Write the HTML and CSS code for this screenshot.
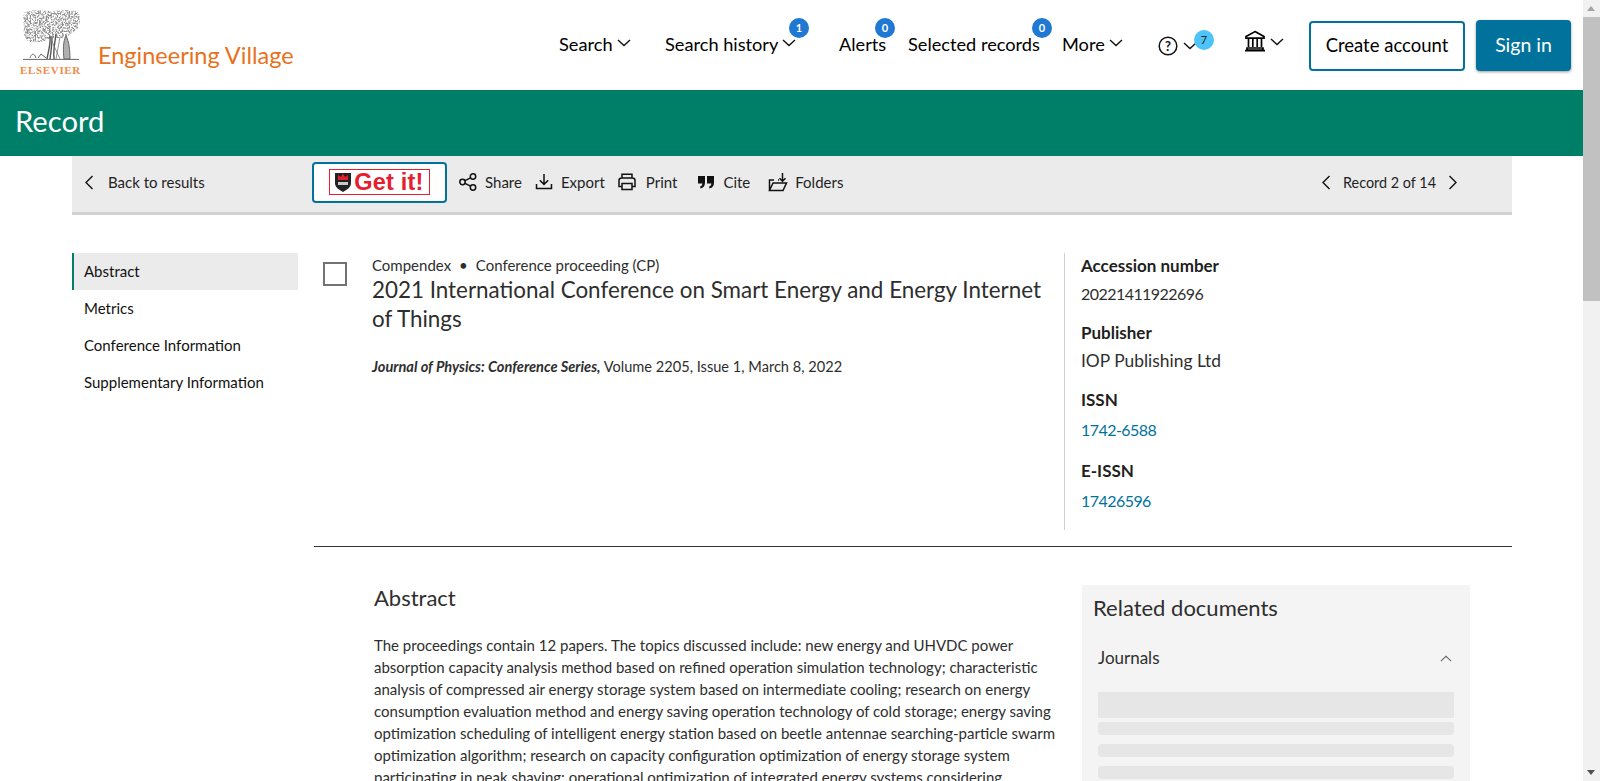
FILE: index.html
```html
<!DOCTYPE html>
<html lang="en">
<head>
<meta charset="utf-8">
<title>Record - Engineering Village</title>
<link rel="stylesheet" href="styles.css">
</head>
<body>
<div class="window">
<div class="page">
  <header class="topbar">
    <a class="brand">
      <span class="elsevier">
        <svg class="tree" viewBox="0 0 58 50" width="58" height="50" aria-hidden="true">
          <defs>
            <filter id="speckle" x="0" y="0" width="100%" height="100%">
              <feTurbulence type="fractalNoise" baseFrequency="0.62" numOctaves="2" seed="7" result="n"/>
              <feColorMatrix in="n" type="matrix" values="0 0 0 0 0.27  0 0 0 0 0.27  0 0 0 0 0.27  3.4 3.4 0 0 -3" result="t"/>
              <feComposite in="t" in2="SourceAlpha" operator="in"/>
            </filter>
          </defs>
          <path class="canopy" filter="url(#speckle)" d="M1 3 C10 -1 20 1 29 1 S50 -1 57 2 L58 12 C57 18 53 22 48 24 C44 29 36 28 30 28 C22 32 16 33 8 32 C3 30 1 24 2 18 Z"/>
          <path class="trunk" d="M28 26 C29 34 26 42 25 49 M34 24 C33 32 31 40 32 49 M30 27 C30 34 29 42 28 49"/>
          <path class="figure" d="M44 26 C41 31 41 41 42 49 L48 49 C48 41 47 31 44 26 Z"/>
          <path class="vine" d="M28 27 L38 49 M38 27 L34 49"/>
          <path class="ground" d="M1 49.4 L57 49.4 M8 48 C9 44 12 42 14 48 M16 48 L19 44 L24 48"/>
        </svg>
        <span class="elsevier-word">ELSEVIER</span>
      </span>
      <span class="brand-name">Engineering Village</span>
    </a>
    <nav class="nav">
      <a class="nav-item">Search<svg class="chev" viewBox="0 0 14 8"><path d="M1 1l6 5.6L13 1"/></svg></a>
      <a class="nav-item">Search history<svg class="chev" viewBox="0 0 14 8"><path d="M1 1l6 5.6L13 1"/></svg><span class="badge b-history">1</span></a>
      <a class="nav-item">Alerts<span class="badge b-alerts">0</span></a>
      <a class="nav-item">Selected records<span class="badge b-selected">0</span></a>
      <a class="nav-item">More<svg class="chev" viewBox="0 0 14 8"><path d="M1 1l6 5.6L13 1"/></svg></a>
      <a class="nav-item help">
        <svg class="help-icon" viewBox="0 0 20 20"><circle cx="10" cy="10" r="8.8"/><text x="10" y="14.6" text-anchor="middle">?</text></svg>
        <svg class="chev" viewBox="0 0 14 8"><path d="M1 1l6 5.6L13 1"/></svg>
        <span class="badge light b-help">7</span>
      </a>
      <a class="nav-item bank">
        <svg class="bank-icon" viewBox="0 0 22 22"><path class="roof" d="M11 1.6 L20 6.6 V8.2 H2 V6.6 Z"/><path d="M3 18 H19 V20 H3 Z M1 20.6 H21 M4.5 9 V17 M8.8 9 V17 M13.2 9 V17 M17.5 9 V17"/></svg>
        <svg class="chev" viewBox="0 0 14 8"><path d="M1 1l6 5.6L13 1"/></svg>
      </a>
      <a class="btn-outline">Create account</a>
      <a class="btn-solid">Sign in</a>
    </nav>
  </header>

  <div class="titlebar"><h1>Record</h1></div>

  <div class="content">
    <div class="toolbar">
      <a class="back"><svg class="chev-side" viewBox="0 0 9 15"><path d="M8 1L1.5 7.5 8 14"/></svg>Back to results</a>
      <a class="getit">
        <span class="getit-box">
          <svg class="shield" viewBox="0 0 16 20"><path class="sh-b" d="M0 1 H16 V11 C16 16 11 18 8 20 C5 18 0 16 0 11 Z"/><path class="sh-r" d="M3 8 L3 3 L6 5 L8 1.5 L10 5 L13 3 L13 8 Z"/><path class="sh-w" d="M3 10 H13 V13 H3 Z"/></svg>
          <span class="getit-text">Get it!</span>
        </span>
      </a>
      <div class="tools">
        <a class="tool"><svg class="ti" viewBox="0 0 20 20"><circle cx="4.5" cy="10" r="2.7"/><circle cx="15" cy="4.5" r="2.7"/><circle cx="15" cy="15.5" r="2.7"/><path d="M7 8.7L12.6 5.8M7 11.3l5.6 2.9"/></svg>Share</a>
        <a class="tool"><svg class="ti" viewBox="0 0 20 20"><path d="M10 2v10M5.8 8.2L10 12.4l4.2-4.2M2.5 12v4.5h15V12"/></svg>Export</a>
        <a class="tool print"><svg class="ti" viewBox="0 0 20 20"><path d="M5 6V2.2h10V6M5 14.5H2V8.5C2 7 3 6 4.5 6h11C17 6 18 7 18 8.5v6h-3M5 11.5h10v6H5z"/></svg>Print</a>
        <a class="tool cite"><svg class="ti fill" viewBox="0 0 20 20"><path d="M2 4h7v6.5C9 13.5 7.5 16 4.5 16.5L4 14.6c1.5-.4 2.3-1.6 2.4-3.1H2zM11 4h7v6.5c0 3-1.5 5.5-4.5 6l-.5-1.9c1.5-.4 2.3-1.6 2.4-3.1H11z"/></svg>Cite</a>
        <a class="tool"><svg class="ti" viewBox="0 0 20 20"><path d="M4 18.5H1.5V8H6M10 8h1M1.5 18.5h13.5L18.5 11H5zM14.5 1v8M11.5 6.2l3 3 3-3"/></svg>Folders</a>
      </div>
      <div class="pager">
        <svg class="chev-side" viewBox="0 0 9 15"><path d="M8 1L1.5 7.5 8 14"/></svg>
        <span>Record 2 of 14</span>
        <svg class="chev-side" viewBox="0 0 9 15"><path d="M1 1l6.5 6.5L1 14"/></svg>
      </div>
    </div>

    <div class="layout">
      <aside class="side">
        <a class="side-item active">Abstract</a>
        <a class="side-item">Metrics</a>
        <a class="side-item">Conference Information</a>
        <a class="side-item">Supplementary Information</a>
      </aside>
      <main class="main">
        <section class="summary">
          <span class="check"></span>
          <div class="doc">
            <p class="meta">Compendex<span class="dot">•</span>Conference proceeding (CP)</p>
            <h2 class="doc-title">2021 International Conference on Smart Energy and Energy Internet of Things</h2>
            <p class="source"><em>Journal of Physics: Conference Series,</em> Volume 2205, Issue 1, March 8, 2022</p>
          </div>
          <dl class="facts">
            <dt>Accession number</dt><dd class="num">20221411922696</dd>
            <dt>Publisher</dt><dd>IOP Publishing Ltd</dd>
            <dt>ISSN</dt><dd class="link num">1742-6588</dd>
            <dt>E-ISSN</dt><dd class="link num">17426596</dd>
          </dl>
        </section>
        <section class="lower">
          <article class="abstract">
            <h3>Abstract</h3>
            <p>The proceedings contain 12 papers. The topics discussed include: new energy and UHVDC power<br>absorption capacity analysis method based on refined operation simulation technology; characteristic<br>analysis of compressed air energy storage system based on intermediate cooling; research on energy<br>consumption evaluation method and energy saving operation technology of cold storage; energy saving<br>optimization scheduling of intelligent energy station based on beetle antennae searching-particle swarm<br>optimization algorithm; research on capacity configuration optimization of energy storage system<br>participating in peak shaving; operational optimization of integrated energy systems considering</p>
          </article>
          <aside class="related">
            <h3>Related documents</h3>
            <div class="acc-head"><span>Journals</span><svg class="chev-up" viewBox="0 0 14 8"><path d="M1 7l6-5.6L13 7"/></svg></div>
            <div class="skeleton tall"></div>
            <div class="skeleton"></div>
            <div class="skeleton"></div>
            <div class="skeleton"></div>
          </aside>
        </section>
      </main>
    </div>
  </div>
</div>
<div class="scrollbar">
  <span class="arrow up"></span>
  <span class="thumb"></span>
  <span class="track"></span>
  <span class="arrow down"></span>
</div>
</div>
</body>
</html>
```

FILE: styles.css
```css
* { box-sizing: border-box; }
html, body { margin: 0; height: 100%; overflow: hidden; }
body { font-family: Lato, "Noto Sans", sans-serif; color: #1f1f1f; background: #fff; font-size: 16px; }
a { color: inherit; text-decoration: none; }
h1, h2, h3, p, dl, dd, dt { margin: 0; font-weight: 400; }

.window { display: flex; height: 781px; }
.page { flex: 1; min-width: 0; overflow: hidden; }

.scrollbar { width: 17px; flex: none; background: #f1f1f1; display: flex; flex-direction: column; align-items: center; }
.scrollbar .thumb { width: 100%; height: 284px; background: #c1c1c1; }
.scrollbar .track { flex: 1; }
.arrow { height: 17px; width: 100%; flex: none; position: relative; }
.arrow::after { content: ""; position: absolute; left: 4px; border-left: 4.5px solid transparent; border-right: 4.5px solid transparent; }
.arrow.up::after { top: 6px; border-bottom: 5px solid #a3a3a3; }
.arrow.down::after { top: 6px; border-top: 5px solid #505050; }

.topbar { height: 90px; display: flex; align-items: flex-start; position: relative; }
.brand { display: flex; align-items: flex-start; padding: 10px 0 0 21px; width: 559px; flex: none; }
.elsevier { display: flex; flex-direction: column; align-items: center; width: 59px; }
.tree { display: block; }
.tree .canopy { fill: #000; }
.tree .trunk { fill: none; stroke: #555; stroke-width: 1.4; }
.tree .figure { stroke: #666; stroke-width: 1; fill: #b0b0b0; }
.tree .vine { fill: none; stroke: #777; stroke-width: .8; }
.tree .ground { fill: none; stroke: #666; stroke-width: 1; }
.elsevier-word { font-family: "Liberation Serif", serif; font-weight: 700; font-size: 11px; line-height: 10px; letter-spacing: .65px; color: #f38b4a; margin-top: 5px; white-space: nowrap; }
.brand-name { font-size: 23.5px; color: #e9711c; margin: 31px 0 0 18px; white-space: nowrap; line-height: 28px; }

.nav { display: grid; grid-template-columns: 106px 174px 69px 154px 96px 87px 64px 167px 95px; align-items: start; font-size: 18.2px; color: #000; }
.nav-item { position: relative; display: flex; align-items: center; height: 28px; margin-top: 30px; white-space: nowrap; }
.chev { width: 14px; height: 8px; margin: 0 0 3px 4px; flex: none; }
.chev path, .chev-up path, .chev-side path { fill: none; stroke: #111; stroke-width: 1.4; }
.badge { position: absolute; width: 20px; height: 20px; border-radius: 50%; background: #1f78d1; color: #fff; font-size: 11px; font-weight: 700; line-height: 20px; text-align: center; top: -12px; }
.badge.light { background: #4ec3f7; color: #1f1f1f; font-weight: 400; width: 20px; height: 20px; top: 0; }
.b-history { left: 124px; }
.b-alerts { left: 36px; }
.b-selected { left: 124px; }
.b-help { left: 36px; }
.help-icon { width: 20px; height: 20px; margin-top: 4px; flex: none; }
.help-icon circle { fill: none; stroke: #111; stroke-width: 1.5; }
.help-icon text { font-size: 13px; fill: #111; font-family: Lato, sans-serif; font-weight: 700; }
.help .chev { margin: 3px 0 0 5px; }
.bank { margin-top: 27px; margin-left: -1px; }
.bank-icon { width: 22px; height: 22px; flex: none; }
.bank-icon path { fill: none; stroke: #000; stroke-width: 1.7; }
.bank .chev { margin: 1px 0 0 4px; }
.btn-outline, .btn-solid { display: flex; align-items: center; justify-content: center; border-radius: 4px; white-space: nowrap; padding-bottom: 2px; }
.btn-outline { margin-top: 21px; height: 50px; width: 156px; border: 2px solid #00729b; font-size: 18.5px; }
.btn-solid { margin-top: 20px; height: 51px; width: 95px; background: #00729b; color: #fff; box-shadow: 0 1px 3px rgba(0,0,0,.4); font-size: 19.5px; }

.titlebar { height: 66px; background: #007f68; color: #fff; display: flex; align-items: center; padding: 0 0 4px 15px; }
.titlebar h1 { font-size: 29.2px; line-height: 1; }

.content { width: 1440px; margin-left: 72px; }
.toolbar { height: 59px; background: #ebebeb; border-bottom: 3px solid #d2d2d2; display: flex; align-items: center; font-size: 15px; padding-bottom: 4px; }
.back { display: flex; align-items: center; width: 240px; padding-left: 12px; }
.chev-side { width: 10px; height: 15px; flex: none; }
.back .chev-side { margin-right: 14px; }
.getit { width: 135px; height: 41px; border: 2px solid #00729b; border-radius: 4px; background: #fff; display: flex; align-items: center; justify-content: center; flex: none; }
.getit-box { width: 101px; height: 26px; border: 1px solid #e4202e; display: flex; align-items: center; justify-content: center; gap: 3px; }
.shield { width: 16px; height: 20px; flex: none; }
.sh-b { fill: #222; }
.sh-r { fill: #e4202e; }
.sh-w { fill: #c9c9c9; }
.getit-text { font-family: "Liberation Sans", sans-serif; font-weight: 700; font-size: 23.5px; line-height: 26px; color: #e4202e; white-space: nowrap; letter-spacing: .2px; }
.tools { display: flex; margin-left: 11px; flex: 1; }
.tool { display: flex; align-items: center; margin-right: 12px; }
.tool.print { margin-right: 19px; }
.tool.print .ti { margin-right: 9px; }
.tool.cite { margin-right: 18px; }
.ti { width: 20px; height: 20px; margin-right: 7px; flex: none; }
.ti path, .ti circle { fill: none; stroke: #111; stroke-width: 1.5; }
.ti.fill path { fill: #111; stroke: none; }
.pager { display: flex; align-items: center; gap: 12px; padding-right: 54px; font-size: 14.4px; }

.layout { display: flex; padding-top: 38px; }
.side { width: 226px; flex: none; margin-right: 16px; }
.side-item { display: flex; align-items: center; height: 37px; padding: 0 0 2px 12px; font-size: 15px; color: #111; }
.side-item.active { background: #ebebeb; border-left: 2px solid #007f68; padding-left: 10px; }
.main { flex: 1; min-width: 0; }

.summary { display: flex; height: 294px; padding-bottom: 16px; border-bottom: 1px solid #333; }
.check { width: 24px; height: 24px; border: 2px solid #737373; margin: 9px 0 0 9px; flex: none; }
.doc { width: 692px; margin-left: 25px; flex: none; padding-right: 20px; }
.meta { font-size: 15px; line-height: 20px; color: #2e2e2e; margin-top: 2px; }
.dot { margin: 0 8px; }
.doc-title { font-size: 22.4px; line-height: 28.5px; color: #2e2e2e; margin-top: 1px; }
.source { font-size: 14.6px; line-height: 20px; margin-top: 24px; color: #2e2e2e; }
.source em { font-weight: 700; }
.facts { border-left: 1px solid #cfcfcf; padding: 2px 0 0 16px; flex: 1; font-size: 17.4px; }
.facts dt { font-weight: 700; font-size: 17px; line-height: 22px; }
.facts dd { line-height: 24px; margin: 5px 0 16px; color: #2e2e2e; }
.facts dd.num { font-size: 16px; letter-spacing: -.55px; }
.facts dd.link { color: #00729b; margin: 7px 0 18px; }

.lower { display: flex; padding: 38px 0 0 60px; }
.abstract { width: 708px; flex: none; }
.abstract h3 { font-size: 22px; line-height: 26px; color: #2e2e2e; }
.abstract p { font-size: 15px; line-height: 22px; margin-top: 23px; white-space: nowrap; color: #2e2e2e; }
.related { width: 388px; background: #f4f4f4; padding: 0 16px 0 16px; height: 220px; }
.related h3 { font-size: 22px; line-height: 26px; margin: 10px 0 0 -5px; color: #2e2e2e; }
.acc-head { display: flex; justify-content: space-between; align-items: center; font-size: 17px; line-height: 24px; margin-top: 25px; margin-bottom: 22px; color: #2e2e2e; }
.chev-up { width: 12px; height: 7px; margin-right: 2px; }
.chev-up path { stroke: #666; stroke-width: 1.2; }
.skeleton { height: 13px; background: #e6e6e6; border-radius: 4px; margin-bottom: 9px; }
.skeleton.tall { height: 26px; border-radius: 0; margin-bottom: 4px; }
```
